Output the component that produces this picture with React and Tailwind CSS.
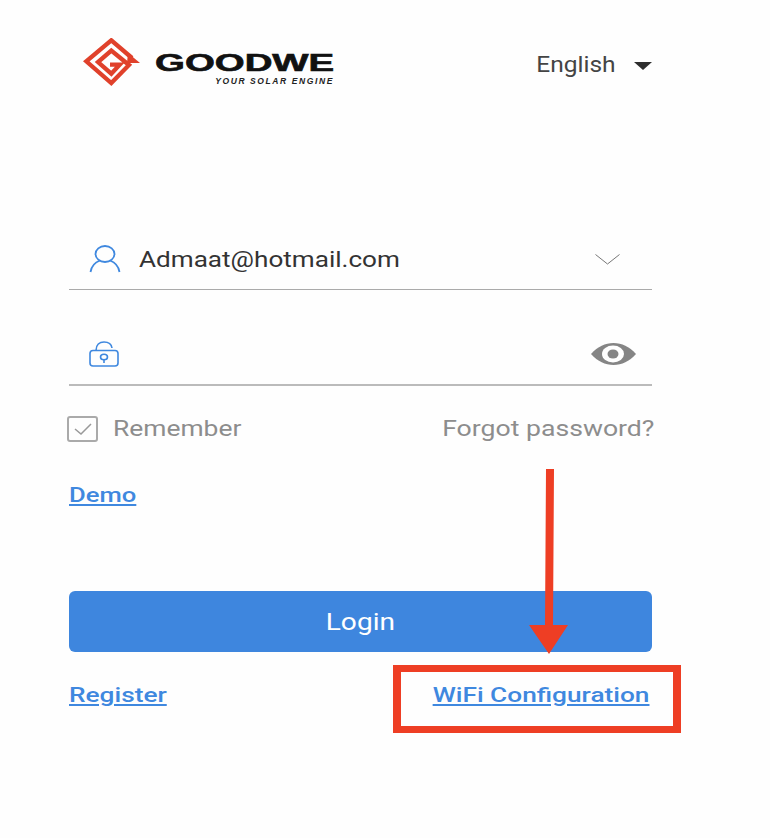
const sans = "font-['Roboto',sans-serif]";

function Logo() {
  return (
    <div className="-mt-[6px] flex h-[48px] gap-[16px]">
      <svg width="57" height="48" viewBox="5 5 57 48" fill="none" stroke="#e0412b" strokeWidth="4.300">
        {/* square spiral squashed into a diamond */}
        <path d="M54 25L33.300 7.300L8.300 28.300L33.300 50L51 32L33.300 17.500L20 29L33.300 40.700L41.700 31.700H32" />
        <path d="M50 20L62 30H49Z" fill="#e0412b" stroke="none" />
      </svg>
      <div className="flex w-[178px] flex-col justify-end">
        <div className="mb-[3px] -ml-[1px] origin-left scale-x-[1.67] font-['Liberation_Sans',sans-serif] text-[23px] font-bold leading-[22px] text-[#111] [-webkit-text-stroke:0.6px_#111]">GOODWE</div>
        <div className="self-end font-['Liberation_Sans',sans-serif] text-[8.5px] font-bold italic leading-[9px] tracking-[1.6px] text-[#222]">YOUR SOLAR ENGINE</div>
      </div>
    </div>
  );
}

function UserIcon() {
  return (
    <svg width="32" height="28" viewBox="0 0 32 28" fill="none" stroke="#3f88df" strokeWidth="1.800">
      <ellipse cx="16" cy="9" rx="9.500" ry="8" />
      <path d="M1.500 27C2.500 20.500 7 17 11 15.500M30.500 27C29.500 20.500 25 17 21 15.500" />
    </svg>
  );
}

function LockIcon() {
  return (
    <svg width="30" height="26" viewBox="0 0 30 26" fill="none" stroke="#3f88df" strokeWidth="1.600">
      <rect x="1" y="9.500" width="28" height="15.500" rx="3" />
      <path d="M7 9.500C7 4 10.500 1 15 1C19.500 1 22.500 3.500 23 7" />
      <ellipse cx="15" cy="16" rx="3.500" ry="2.800" />
      <path d="M15 19V22" />
    </svg>
  );
}

function EyeIcon() {
  return (
    <svg width="45" height="22" viewBox="0 0 45 22">
      <path d="M0 11C7 3.500 14 0 22.500 0C31 0 38 3.500 45 11C38 18.500 31 22 22.500 22C14 22 7 18.500 0 11Z" fill="#858585" />
      <ellipse cx="22" cy="11" rx="11" ry="8.500" fill="#fff" />
      <ellipse cx="22" cy="11" rx="5.500" ry="4.500" fill="#858585" />
    </svg>
  );
}

export default function App() {
  return (
    <div className={`relative h-[838px] w-[770px] overflow-hidden bg-[#fefefe] ${sans}`}>
      <div className="ml-[69px] w-[583px]">
        {/* Header */}
        <div className="flex h-[130px] items-center justify-between pl-[14px]">
          <Logo />
          <div className="flex items-center gap-[18px] text-[21.500px] text-[#444]">
            <span className="inline-block origin-right scale-x-[1.14]">English</span>
            <span className="mt-[1px] h-0 w-0 border-x-[9px] border-t-[8px] border-x-transparent border-t-[#2e2e2e]" />
          </div>
        </div>

        {/* Form */}
        <div className="mt-[99px] flex h-[61px] items-center justify-between border-b border-[#aaa] pl-[20px] pr-[32px]">
          <div className="flex items-center gap-[18px]">
            <UserIcon />
            <span className="inline-block origin-left scale-x-[1.16] pt-[2px] text-[22.500px] text-[#333]">Admaat@hotmail.com</span>
          </div>
          <svg width="25" height="11" viewBox="0 0 25 11" fill="none" stroke="#777" strokeWidth="1">
            <path d="M0.500 0.500L12.500 10L24.500 0.500" />
          </svg>
        </div>
        <div className="flex h-[96px] items-center justify-between border-b-2 border-[#bbb] pl-[20px] pr-[16px] pt-[34px]">
          <LockIcon />
          <EyeIcon />
        </div>
        <div className="mt-[29px] flex items-center justify-between text-[22px] leading-[28px] text-[#8d8d8d]">
          <div className="-ml-[2px] flex items-center gap-[15px]">
            <span className="flex h-[26px] w-[31px] items-center justify-center rounded-[3px] border-2 border-[#aaa]">
              <svg width="18" height="12" viewBox="0 0 18 12" fill="none" stroke="#999" strokeWidth="1.500">
                <path d="M1 6L7 11L17 1" />
              </svg>
            </span>
            <span className="inline-block origin-left scale-x-[1.2]">Remember</span>
          </div>
          <span className="-mr-[2px] inline-block origin-right scale-x-[1.21]">Forgot password?</span>
        </div>
        <div className="mt-[38px] text-[21px] font-medium leading-[28px] text-[#3f88df]">
          <a className="inline-block origin-left scale-x-[1.22] underline underline-offset-2">Demo</a>
        </div>
        <button className="mt-[82px] flex h-[61px] w-full items-center justify-center rounded-[6px] bg-[#3e86de] pt-[4px] text-[23px] text-white">
          <span className="inline-block scale-x-[1.22]">Login</span>
        </button>
        <div className="mt-[29px] flex items-center justify-between pr-[3px] text-[21px] font-medium leading-[28px] text-[#3f88df]">
          <a className="inline-block origin-left scale-x-[1.25] underline underline-offset-2">Register</a>
          <a className="inline-block origin-right scale-x-[1.25] underline underline-offset-2">WiFi Configuration</a>
        </div>
      </div>

      {/* Annotation over the screenshot */}
      <div className="absolute left-[393px] top-[665px] h-[68px] w-[288px] border-x-[8px] border-y-[7px] border-[#ee3e24]" />
      <svg className="absolute left-[525px] top-[465px]" width="48" height="192" viewBox="0 0 48 192">
        <path d="M21 4H29L28 160H43L24 189L4 160H20Z" fill="#ee3e24" />
      </svg>
    </div>
  );
}
